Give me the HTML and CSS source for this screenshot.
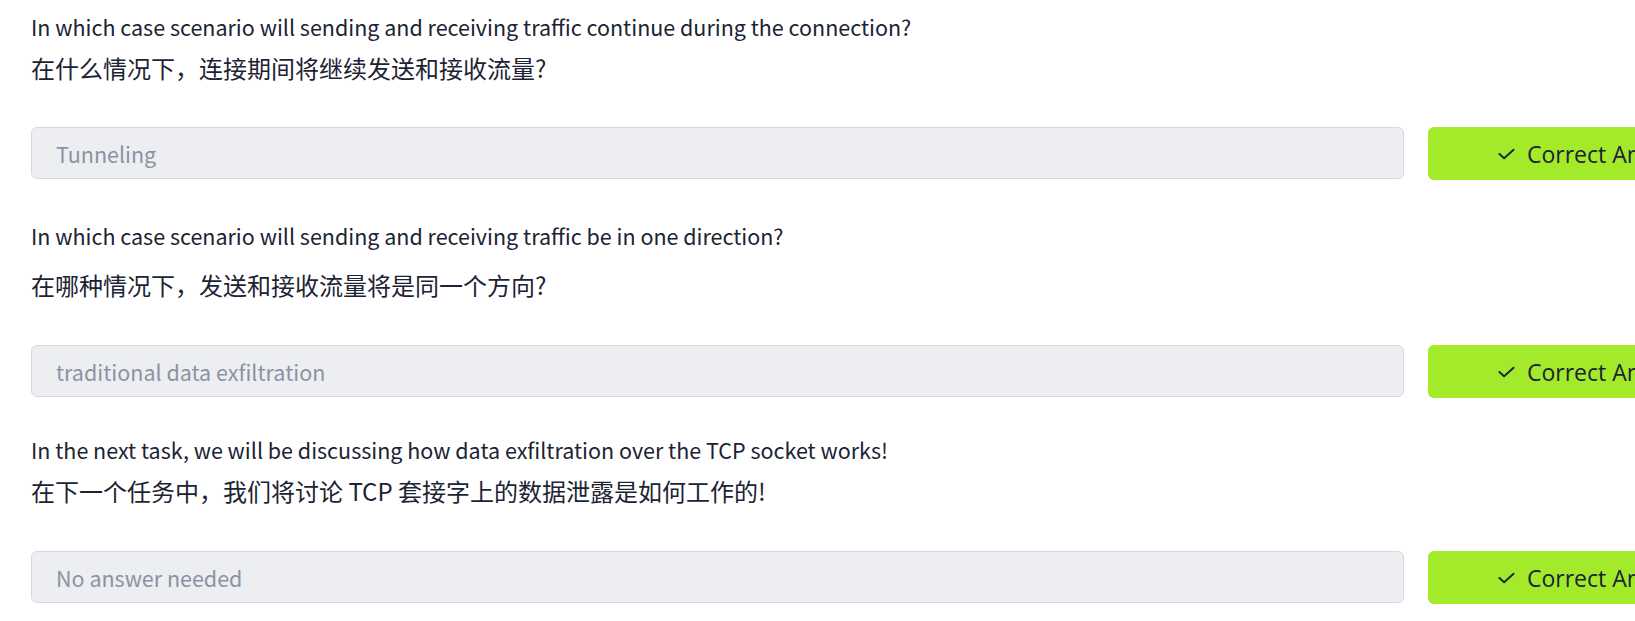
FILE: index.html
```html
<!DOCTYPE html>
<html lang="en">
<head>
<meta charset="utf-8">
<title>Task questions</title>
<link rel="stylesheet" href="styles.css">
</head>
<body>
<main class="page">
  <section class="qa qa--first">
    <div class="question">
      <p class="q-en">In which case scenario will sending and receiving traffic continue during the connection?</p>
      <p class="q-zh">在什么情况下，连接期间将继续发送和接收流量?</p>
    </div>
    <div class="answer-row">
      <div class="answer-input">Tunneling</div>
      <button class="answer-btn" type="button">
        <svg class="check" viewBox="0 0 18 12" aria-hidden="true"><path d="M1.5 6 L6.5 10.5 L16.5 1.5" fill="none" stroke="currentColor" stroke-width="2" stroke-linecap="round" stroke-linejoin="round"/></svg>
        <span>Correct Answer</span>
      </button>
    </div>
  </section>

  <section class="qa qa--wide">
    <div class="question">
      <p class="q-en">In which case scenario will sending and receiving traffic be in one direction?</p>
      <p class="q-zh">在哪种情况下，发送和接收流量将是同一个方向?</p>
    </div>
    <div class="answer-row">
      <div class="answer-input">traditional data exfiltration</div>
      <button class="answer-btn" type="button">
        <svg class="check" viewBox="0 0 18 12" aria-hidden="true"><path d="M1.5 6 L6.5 10.5 L16.5 1.5" fill="none" stroke="currentColor" stroke-width="2" stroke-linecap="round" stroke-linejoin="round"/></svg>
        <span>Correct Answer</span>
      </button>
    </div>
  </section>

  <section class="qa qa--last">
    <div class="question">
      <p class="q-en">In the next task, we will be discussing how data exfiltration over the TCP socket works!</p>
      <p class="q-zh">在下一个任务中，我们将讨论 TCP 套接字上的数据泄露是如何工作的!</p>
    </div>
    <div class="answer-row">
      <div class="answer-input">No answer needed</div>
      <button class="answer-btn" type="button">
        <svg class="check" viewBox="0 0 18 12" aria-hidden="true"><path d="M1.5 6 L6.5 10.5 L16.5 1.5" fill="none" stroke="currentColor" stroke-width="2" stroke-linecap="round" stroke-linejoin="round"/></svg>
        <span>Correct Answer</span>
      </button>
    </div>
  </section>
</main>
</body>
</html>
```
FILE: styles.css
```css
html, body {
  margin: 0;
  padding: 0;
  background: #ffffff;
  overflow: hidden;
}

.page {
  padding: 12px 0 0 31px;
  font-family: "Noto Sans CJK SC", sans-serif;
  color: #1c2333;
  width: 1800px;
}

.qa {
  margin-top: 41px;
}

.qa--first {
  margin-top: 0;
}

.qa--last {
  margin-top: 37px;
}

.question p {
  margin: 0;
}

.q-en {
  font-size: 21.5px;
  line-height: 30px;
}

.q-zh {
  font-size: 24px;
  line-height: 36px;
  margin-top: 8px !important;
}

.qa--wide .q-zh {
  margin-top: 16px !important;
}

.answer-row {
  display: flex;
  gap: 24px;
  margin-top: 42px;
}

.qa--first .answer-row {
  margin-top: 41px;
}

.answer-input {
  box-sizing: border-box;
  flex: 0 0 1373px;
  height: 52px;
  padding: 0 24px;
  display: flex;
  align-items: center;
  background: #edeef2;
  border: 1px solid #d5d9df;
  border-radius: 6px;
  color: #8b93a3;
  font-size: 21.5px;
  font-family: "Noto Sans CJK SC", sans-serif;
}

.answer-btn {
  flex: 0 0 334px;
  height: 53px;
  display: flex;
  align-items: center;
  justify-content: center;
  gap: 12px;
  background: #a3ea2a;
  border: none;
  border-radius: 6px;
  color: #1c2333;
  font-family: "Open Sans", sans-serif;
  font-size: 23px;
  padding: 0;
}

.check {
  width: 17px;
  height: 12px;
}
```
